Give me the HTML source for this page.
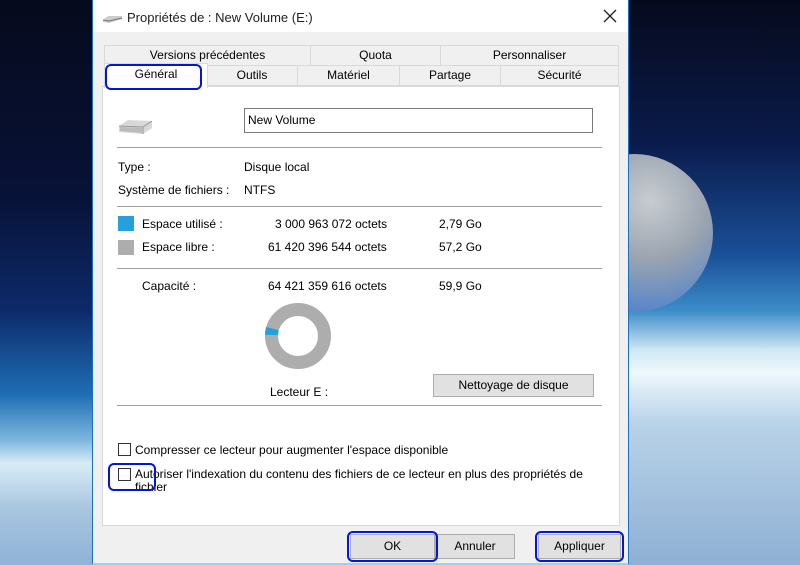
<!DOCTYPE html>
<html><head><meta charset="utf-8"><style>
*{margin:0;padding:0;box-sizing:border-box}
body{width:800px;height:565px;overflow:hidden;position:relative;font-family:"Liberation Sans",sans-serif;font-size:12px;color:#000;
background:linear-gradient(180deg,#060a1c 0%,#081238 35%,#0d2a6a 55%,#1f6fb5 70%,#7fb8e0 78%,#d8ecf6 82%,#a9c6e0 90%,#8fb2d6 100%)}
.rbg{position:absolute;left:629px;top:0;width:171px;height:565px;background:linear-gradient(180deg,#060a1c 0%,#0a1a4a 25%,#1a4f98 45%,#3c8cc8 55%,#cfe8f4 62%,#eef8fc 66%,#b8d2e8 75%,#8fb0d4 100%)}
.moon{position:absolute;left:555px;top:154px;width:158px;height:158px;border-radius:50%;background:radial-gradient(circle at 60% 30%,#c8ccd0 0%,#9aa4b0 40%,#5a86c8 75%,#4a7ccc 100%)}
.a{position:absolute;white-space:nowrap}
.dlg{position:absolute;left:92px;top:0;width:537px;height:565px;background:#f0f0f0;border-left:1px solid #1a6fc0;border-right:1px solid #1a6fc0;border-bottom:2px solid #8fd6f0}
.title{position:absolute;left:0;top:0;width:535px;height:32px;background:#fff}
.tab{position:absolute;background:#f0f0f0;border:1px solid #d9d9d9;text-align:center;line-height:19px}
.panel{position:absolute;left:9px;top:86px;width:518px;height:440px;background:#fff;border:1px solid #d9d9d9}
.sep{position:absolute;left:117px;width:485px;height:1px;background:#a0a0a0}
.btn{position:absolute;background:#e1e1e1;border:1px solid #adadad;text-align:center}
.hl{position:absolute;border:2px solid #0015e0;border-radius:6px}
.cb{position:absolute;width:13px;height:13px;border:1px solid #333;background:#fff}
</style></head><body>
<div class="rbg"></div>
<div class="moon"></div>
<div class="dlg">
<div class="title"></div>
<div class="tab" style="left:11px;top:45px;width:207px;height:21px">Versions précédentes</div>
<div class="tab" style="left:217px;top:45px;width:131px;height:21px">Quota</div>
<div class="tab" style="left:347px;top:45px;width:179px;height:21px">Personnaliser</div>
<div class="tab" style="left:113px;top:65px;width:92px;height:21px">Outils</div>
<div class="tab" style="left:204px;top:65px;width:103px;height:21px">Matériel</div>
<div class="tab" style="left:306px;top:65px;width:102px;height:21px">Partage</div>
<div class="tab" style="left:407px;top:65px;width:119px;height:21px">Sécurité</div>
<div class="panel"></div>
<div class="tab" style="left:11px;top:63px;width:104px;height:25px;background:#fff;border-bottom:none;line-height:20px">Général</div>
</div>
<svg class="a" style="left:100px;top:10px" width="26" height="14"><path d="M3 10 L8 6 L22 6 L22 9 L9 13 L3 12Z" fill="#ccc"/><path d="M3 10 L9 11 L22 8" stroke="#777" fill="none"/></svg>
<div class="a" style="left:127px;top:10px;font-size:13px;color:#222">Propriétés de : New Volume (E:)</div>
<svg class="a" style="left:603px;top:9px" width="14" height="14"><path d="M1 1L13 13M13 1L1 13" stroke="#222" stroke-width="1.3"/></svg>
<div class="hl" style="left:105px;top:64px;width:97px;height:26px"></div>
<svg class="a" style="left:116px;top:114px" width="40" height="24"><path d="M3 12 L12 6 L36 7 L36 14 L27 20 L3 18Z" fill="#d8d8d8"/><path d="M3 12 L27 13 L36 7 M27 13 L27 20" stroke="#999" fill="none"/><path d="M4 13 L26 14 L26 19 L4 17Z" fill="#bbb"/></svg>
<div class="a" style="left:244px;top:108px;width:349px;height:25px;border:1px solid #7a7a7a;background:#fff;padding:4px 3px">New Volume</div>
<div class="sep" style="top:147px"></div>
<div class="a" style="left:118px;top:160px">Type :</div><div class="a" style="left:244px;top:160px">Disque local</div>
<div class="a" style="left:118px;top:183px">Système de fichiers :</div><div class="a" style="left:244px;top:183px">NTFS</div>
<div class="sep" style="top:206px"></div>
<div class="a" style="left:118px;top:216px;width:16px;height:15px;background:#26a0da"></div>
<div class="a" style="left:118px;top:240px;width:16px;height:15px;background:#adadad"></div>
<div class="a" style="left:142px;top:217px">Espace utilisé :</div><div class="a" style="left:275px;top:217px">3 000 963 072 octets</div><div class="a" style="left:439px;top:217px">2,79 Go</div>
<div class="a" style="left:142px;top:240px">Espace libre :</div><div class="a" style="left:268px;top:240px">61 420 396 544 octets</div><div class="a" style="left:439px;top:240px">57,2 Go</div>
<div class="sep" style="top:268px"></div>
<div class="a" style="left:142px;top:279px">Capacité :</div><div class="a" style="left:268px;top:279px">64 421 359 616 octets</div><div class="a" style="left:439px;top:279px">59,9 Go</div>
<svg class="a" style="left:264px;top:302px" width="68" height="68"><circle cx="34" cy="34" r="26.5" fill="none" stroke="#adadad" stroke-width="13"/><path d="M8.4 26.6 A26.5 26.5 0 0 0 7.5 33" stroke="#26a0da" stroke-width="13" fill="none"/></svg>
<div class="a" style="left:270px;top:385px">Lecteur E :</div>
<div class="btn" style="left:433px;top:374px;width:161px;height:23px;line-height:21px">Nettoyage de disque</div>
<div class="sep" style="top:405px"></div>
<div class="cb" style="left:118px;top:443px"></div>
<div class="a" style="left:135px;top:443px">Compresser ce lecteur pour augmenter l'espace disponible</div>
<div class="cb" style="left:118px;top:468px"></div>
<div class="a" style="left:135px;top:468px;line-height:13px">Autoriser l'indexation du contenu des fichiers de ce lecteur en plus des propriétés de<br>fichier</div>
<div class="hl" style="left:108px;top:463px;width:48px;height:28px"></div>
<div class="btn" style="left:350px;top:534px;width:85px;height:25px;line-height:23px">OK</div>
<div class="btn" style="left:435px;top:534px;width:80px;height:25px;line-height:23px">Annuler</div>
<div class="btn" style="left:538px;top:534px;width:83px;height:25px;line-height:23px">Appliquer</div>
<div class="hl" style="left:347px;top:531px;width:91px;height:31px"></div>
<div class="hl" style="left:535px;top:531px;width:89px;height:31px"></div>
</body></html>
